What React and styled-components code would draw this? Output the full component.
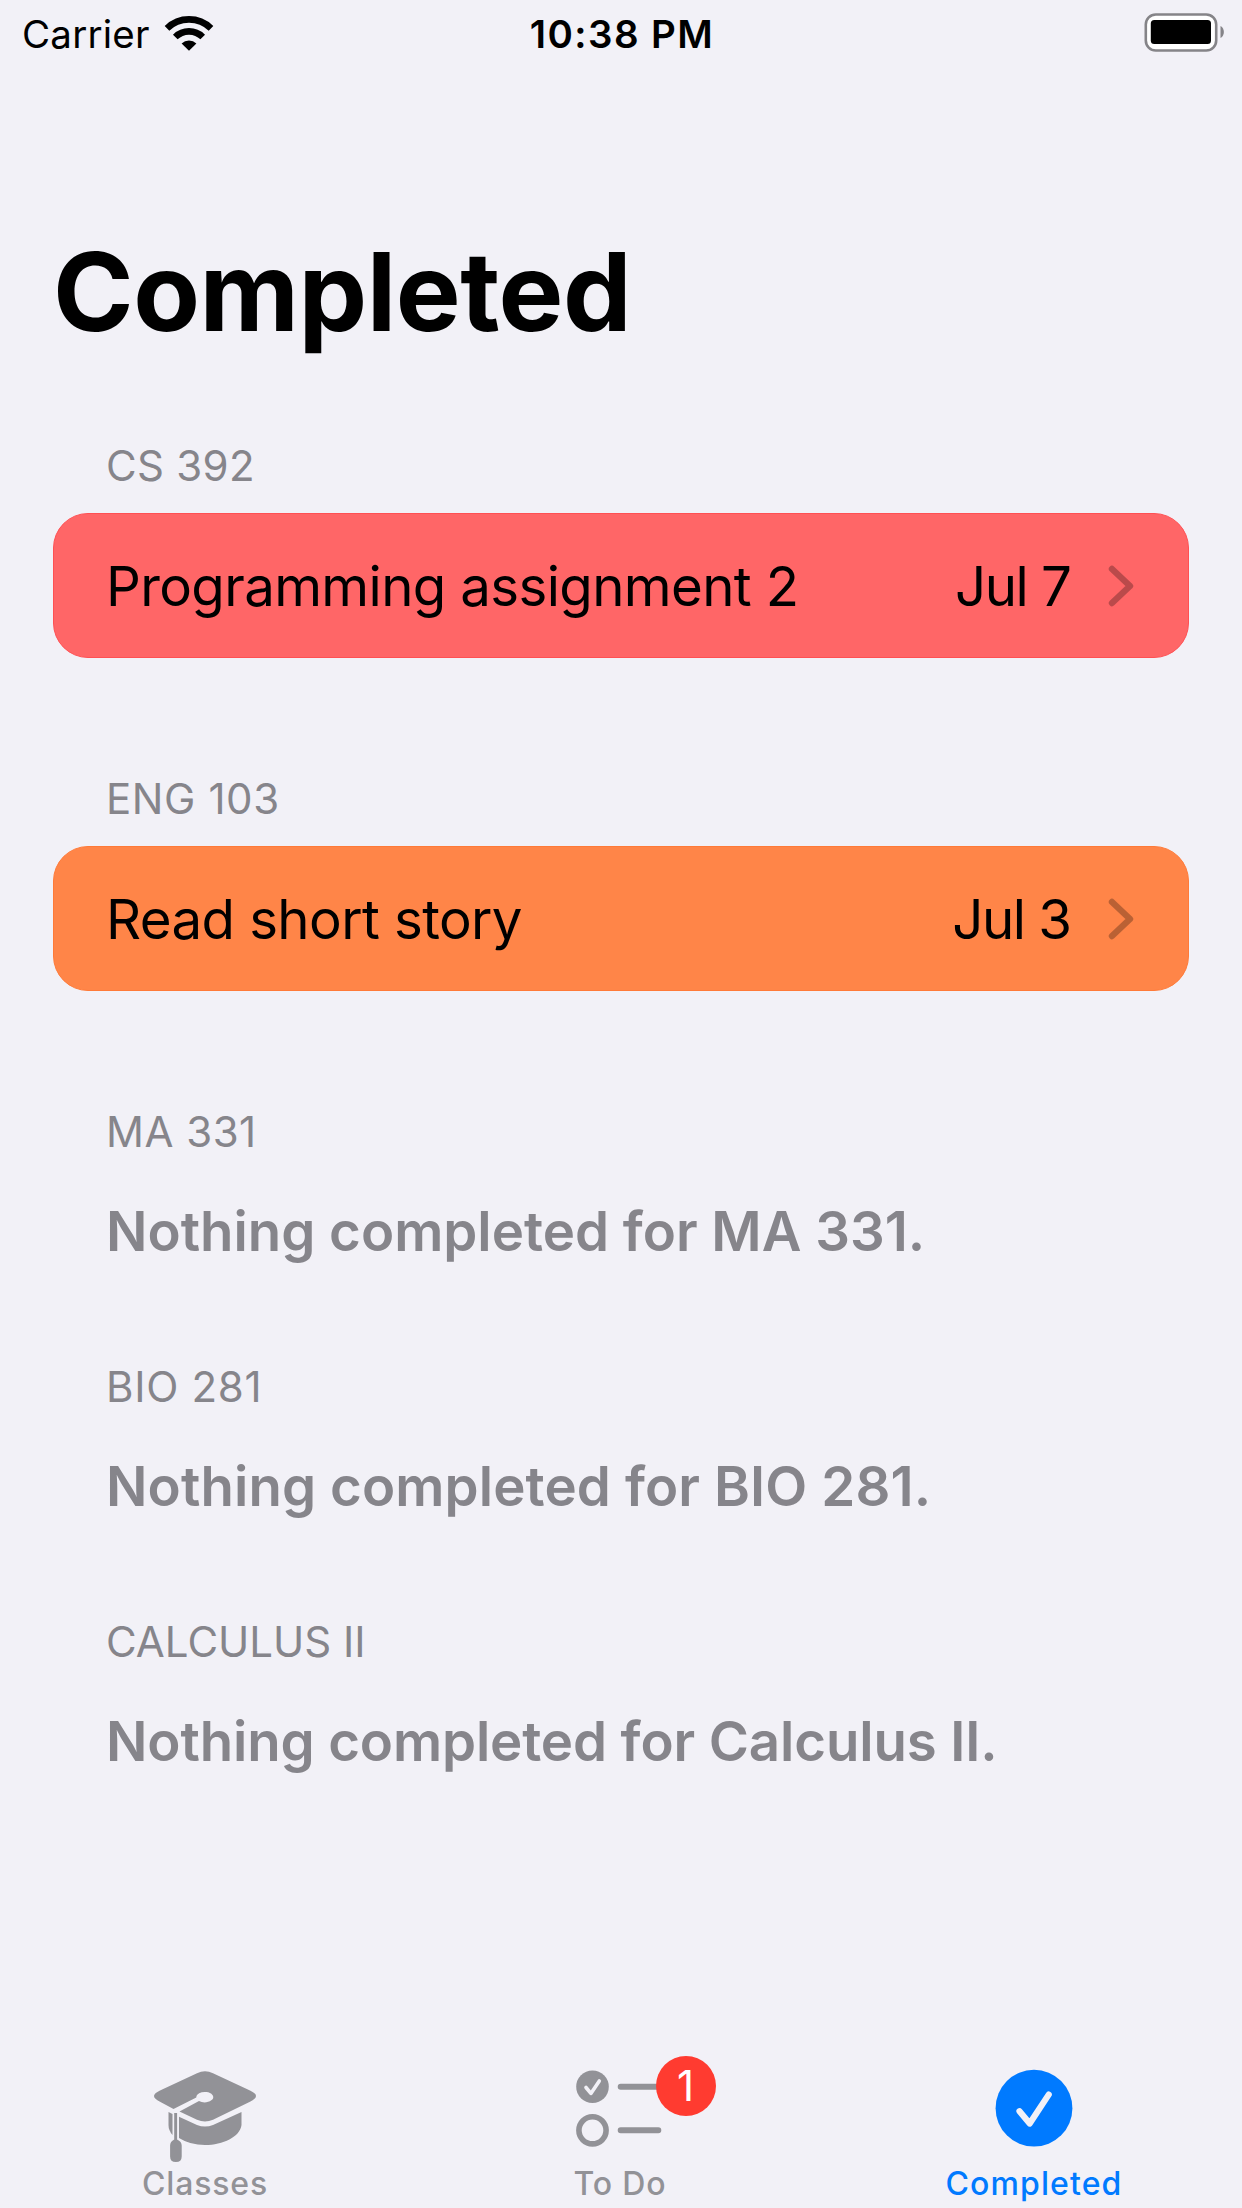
import React from "react";
import styled, { createGlobalStyle } from "styled-components";

const Global = createGlobalStyle`
  html, body { margin: 0; padding: 0; background: #f2f1f7; }
  * { box-sizing: border-box; }
`;

const Screen = styled.div`
  width: 1242px;
  height: 2208px;
  overflow: hidden;
  display: flex;
  flex-direction: column;
  background: #f2f1f7;
  color: #000;
  font-family: Inter, "Liberation Sans", sans-serif;
  white-space: nowrap;
`;

const StatusBar = styled.header`
  display: grid;
  grid-template-columns: 1fr auto 1fr;
  align-items: center;
  height: 68px;
  padding: 0 16px 0 22px;
  font-size: 38.5px;
  line-height: 68px;
`;

const Network = styled.div`
  display: flex;
  align-items: center;
  gap: 14px;
  letter-spacing: 0.2px;
`;

const Time = styled.div`
  font-weight: 600;
  letter-spacing: 1.4px;
  margin-right: 4px;
`;

const Battery = styled.div`
  display: flex;
  align-self: start;
  justify-content: flex-end;
  padding-top: 13px;
  height: 52px;
`;

const Title = styled.h1`
  margin: 156px 0 0;
  padding-left: 53px;
  height: 134px;
  font-size: 109px;
  line-height: 134px;
  font-weight: 700;
  letter-spacing: -0.5px;
`;

const List = styled.main`
  flex: 1;
  display: flex;
  flex-direction: column;
  padding: 78px 53px 0;
`;

const Section = styled.section`
  height: ${(p) => (p.$empty ? 255 : 333)}px;
`;

const SectionHeader = styled.h2`
  margin: 0;
  padding-left: 53px;
  height: 60px;
  line-height: 60px;
  font-size: 42px;
  font-weight: 400;
  letter-spacing: ${(p) => p.$track || 0}px;
  color: #86858b;
`;

const Card = styled.div`
  display: flex;
  align-items: center;
  height: 145px;
  margin-top: 17px;
  padding: 0 54px 0 52px;
  border-radius: 35px;
  border: 1px solid ${(p) => p.$edge};
  background: ${(p) => p.$fill};
  font-size: 54.6px;
`;

const CardName = styled.span`
  flex: 1;
  letter-spacing: ${(p) => p.$track || 0}px;
`;

const CardDate = styled.span`
  margin-right: 37.5px;
  letter-spacing: -1.5px;
`;

const Empty = styled.p`
  margin: 0;
  padding: 36px 0 0 53px;
  line-height: 66px;
  font-size: 54.6px;
  font-weight: 600;
  letter-spacing: ${(p) => p.$track || 0}px;
  color: #86858b;
`;

const TabBar = styled.nav`
  display: grid;
  grid-template-columns: repeat(3, 1fr);
  height: 162px;
`;

const Tab = styled.div`
  display: flex;
  flex-direction: column;
  align-items: center;
  padding-right: ${(p) => p.$pull || 0}px;
  color: ${(p) => (p.$active ? "#007aff" : "#929297")};
`;

const TabIcon = styled.div`
  position: relative;
  height: 118px;
  display: flex;
`;

const TabLabel = styled.span`
  font-size: 32px;
  line-height: 40px;
  font-weight: 500;
  letter-spacing: ${(p) => p.$track || 0}px;
`;

const Badge = styled.span`
  position: absolute;
  left: 79.5px;
  top: 9.5px;
  width: 60px;
  height: 60px;
  border-radius: 50%;
  background: #ff3b30;
  color: #fff;
  font-size: 42px;
  line-height: 60px;
  text-align: center;
`;

const Wifi = () => (
  <svg width="50" height="38" viewBox="0 0 50 38">
    <g fill="none" stroke="#000" strokeWidth="6.6">
      <path d="M3 13.3a31.5 31.5 0 0 1 44 0" />
      <path d="M11.3 22a19.5 19.5 0 0 1 27.400 0" />
    </g>
    <path d="M17.6 28.6a10.5 10.5 0 0 1 14.800 0L25 35.800z" />
  </svg>
);

const BatteryIcon = () => (
  <svg width="82" height="39" viewBox="0 0 82 39">
    <rect x="1.8" y="1.500" width="70.400" height="36" rx="10" fill="#fff" stroke="#858488" strokeWidth="2.600" />
    <rect x="6.800" y="7" width="60.200" height="24" rx="3.500" fill="#000" />
    <path d="M76.500 13c4.500 2 4.500 10 0 12z" fill="#858488" />
  </svg>
);

const Chevron = () => (
  <svg width="26" height="42" viewBox="0 0 26 42">
    <path d="M4 4l18 17L4 38" fill="none" stroke="#000" strokeOpacity=".27" strokeWidth="6.400" strokeLinecap="round" strokeLinejoin="round" />
  </svg>
);

const CapIcon = () => (
  <svg width="104" height="118" viewBox="0 0 104 118" fill="currentColor">
    <path d="M44 27.200Q52 23.400 60 27.200L97 44.500Q109 50 97 55.800L60 73.800Q52 77.300 44 73.800L26.500 65.500L46 55A8.500 5.200 0 1 0 43.300 51.600L20.500 63L7 55.800Q-5 50 7 44.500z" />
    <path d="M15.500 66l4 2v21q-4-4.500-4-10z" />
    <path d="M26 70.800l18 8.200q8 3 16 0l28.500-13v13C87 91 70 99 52 99Q37 99 26 92z" />
    <path d="M21.200 67h2.900v26.500q4.600 2 4.600 6v11q0 5.500-5.800 5.500t-5.800-5.500v-11q0-4 4.100-6z" />
  </svg>
);

const TodoIcon = () => (
  <svg width="88" height="118" viewBox="0 0 88 118">
    <circle cx="16.500" cy="40.700" r="16.300" fill="currentColor" />
    <path d="M10 41.500l4.900 5.900 8.400-12.400" fill="none" stroke="#f2f1f7" strokeWidth="3.600" strokeLinecap="round" strokeLinejoin="round" />
    <circle cx="16.500" cy="84.300" r="13.600" fill="none" stroke="currentColor" strokeWidth="5.600" />
    <path d="M44.700 40.700H82.300M44.700 84.300H82.300" stroke="currentColor" strokeWidth="6" strokeLinecap="round" />
  </svg>
);

const DoneIcon = () => (
  <svg width="78" height="118" viewBox="0 0 78 118">
    <circle cx="39" cy="62.200" r="38.400" fill="currentColor" />
    <path d="M24.500 65.200l10.200 12.300 19-28.900" fill="none" stroke="#f2f1f7" strokeWidth="6.200" strokeLinecap="round" strokeLinejoin="round" />
  </svg>
);

export default function App() {
  return (
    <Screen>
      <Global />
      <StatusBar>
        <Network>
          <span>Carrier</span>
          <Wifi />
        </Network>
        <Time>10:38 PM</Time>
        <Battery>
          <BatteryIcon />
        </Battery>
      </StatusBar>
      <Title>Completed</Title>
      <List>
        <Section>
          <SectionHeader $track={0.3}>CS 392</SectionHeader>
          <Card $fill="#ff6667" $edge="#ff5053">
            <CardName $track={-0.63}>Programming assignment 2</CardName>
            <CardDate>Jul 7</CardDate>
            <Chevron />
          </Card>
        </Section>
        <Section>
          <SectionHeader $track={0.6}>ENG 103</SectionHeader>
          <Card $fill="#ff8548" $edge="#ff7a38">
            <CardName $track={-0.6}>Read short story</CardName>
            <CardDate>Jul 3</CardDate>
            <Chevron />
          </Card>
        </Section>
        <Section $empty>
          <SectionHeader $track={0.5}>MA 331</SectionHeader>
          <Empty $track={0}>Nothing completed for MA 331.</Empty>
        </Section>
        <Section $empty>
          <SectionHeader $track={0.7}>BIO 281</SectionHeader>
          <Empty $track={0.12}>Nothing completed for BIO 281.</Empty>
        </Section>
        <Section $empty>
          <SectionHeader>CALCULUS II</SectionHeader>
          <Empty $track={-0.12}>Nothing completed for Calculus II.</Empty>
        </Section>
      </List>
      <TabBar>
        <Tab $pull={4}>
          <TabIcon>
            <CapIcon />
          </TabIcon>
          <TabLabel $track={0.85}>Classes</TabLabel>
        </Tab>
        <Tab $pull={2}>
          <TabIcon>
            <TodoIcon />
            <Badge>1</Badge>
          </TabIcon>
          <TabLabel $track={0.9}>To Do</TabLabel>
        </Tab>
        <Tab $active $pull={2}>
          <TabIcon>
            <DoneIcon />
          </TabIcon>
          <TabLabel $track={1.1}>Completed</TabLabel>
        </Tab>
      </TabBar>
    </Screen>
  );
}
